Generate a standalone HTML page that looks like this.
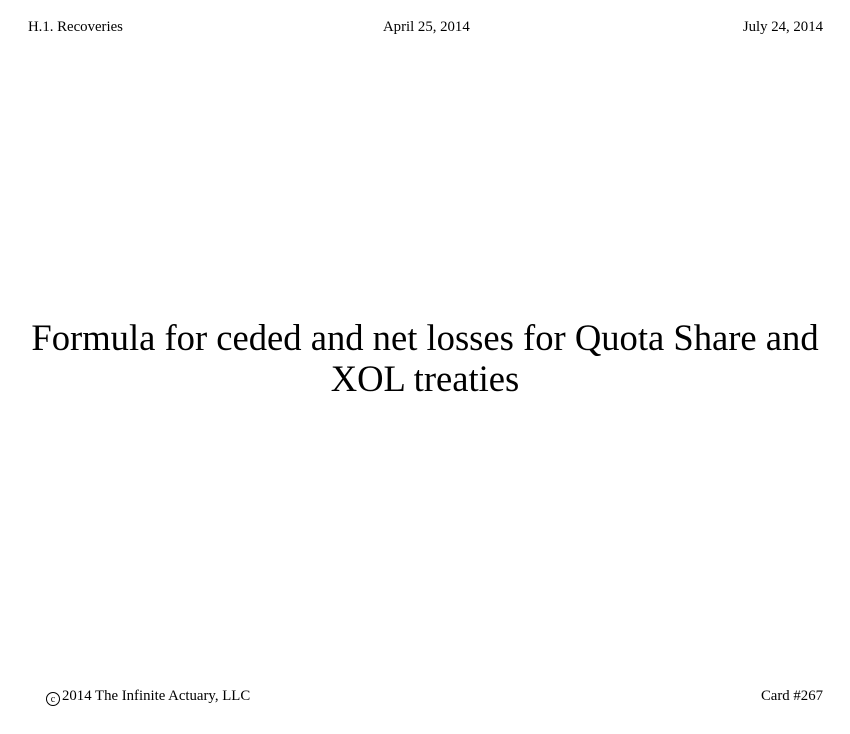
<!DOCTYPE html>
<html><head><meta charset="utf-8"><style>
html,body{margin:0;padding:0;background:#fff;}
body{width:850px;height:734px;position:relative;font-family:"Liberation Serif",serif;color:#000;overflow:hidden;}
.s{position:absolute;font-size:14.8px;line-height:16px;white-space:nowrap;}
.t{position:absolute;left:0;width:850px;text-align:center;font-size:36.6px;line-height:41px;top:317px;}
.c{display:inline-block;width:14px;height:14px;border:1px solid #000;border-radius:50%;font-size:10px;line-height:13px;text-align:center;vertical-align:-2px;margin-right:2px;box-sizing:border-box;}
</style></head><body>
<div class="s" style="left:28px;top:19px">H.1. Recoveries</div>
<div class="s" style="left:383px;top:19px">April 25, 2014</div>
<div class="s" style="right:27px;top:19px">July 24, 2014</div>
<div class="t">Formula for ceded and net losses for Quota Share and<br>XOL treaties</div>
<div class="s" style="left:46px;top:688px"><span class="c">c</span>2014 The Infinite Actuary, LLC</div>
<div class="s" style="right:27px;top:688px">Card #267</div>
</body></html>
